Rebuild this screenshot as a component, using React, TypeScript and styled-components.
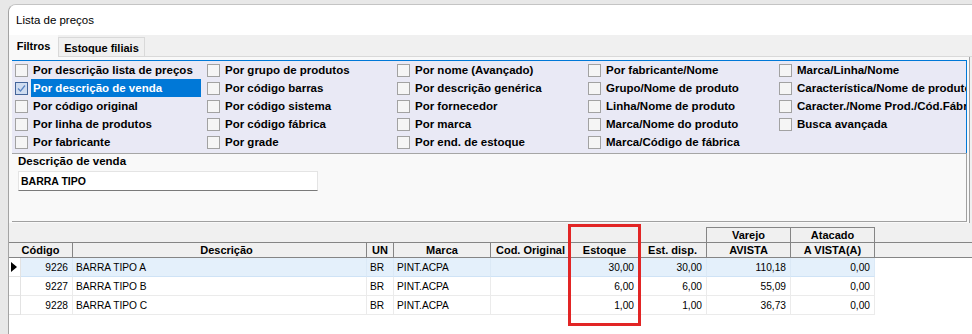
import React from 'react';
import styled, { createGlobalStyle } from 'styled-components';

// Price list window: title bar, filter tabs with a checkbox grid, the
// description search field, and the product grid underneath.

const GlobalStyle = createGlobalStyle`
  html, body { margin: 0; padding: 0; }
  body {
    background: #e8e8e8;
    font-family: "Liberation Sans", Arial, sans-serif;
    color: #000;
    overflow: hidden;
  }
  * { box-sizing: border-box; }
`;

const Page = styled.div`
  width: 972px;
  height: 334px;
  padding: 4px 0 0 8px;
  overflow: hidden;
`;

const Window = styled.div`
  width: 964px;
  height: 340px;
  display: flex;
  flex-direction: column;
  background: #f0f0f0;
  border-top: 1px solid #c4c4c4;
  border-left: 1px solid #a3a3a3;
  border-top-left-radius: 8px;
  overflow: hidden;
`;

const TitleBar = styled.div`
  height: 30px;
  flex-shrink: 0;
  display: flex;
  align-items: center;
  padding-left: 7px;
  background: #fff;
  font-size: 11.5px;
`;

const TabStrip = styled.div`
  height: 22px;
  flex-shrink: 0;
  display: flex;
  align-items: flex-end;
`;

const Tab = styled.div<{ $active?: boolean }>`
  display: flex;
  align-items: center;
  justify-content: center;
  font-size: 11px;
  font-weight: 700;
  width: ${(p) => (p.$active ? 49 : 87)}px;
  height: ${(p) => (p.$active ? 22 : 20)}px;
  background: ${(p) => (p.$active ? '#f9f9f9' : '#f0f0f0')};
  border: 1px solid ${(p) => (p.$active ? '#f9f9f9' : '#d9d9d9')};
  border-bottom-color: ${(p) => (p.$active ? '#f9f9f9' : '#d9d9d9')};
  padding-top: ${(p) => (p.$active ? 0 : 1)}px;
`;

const TabFiller = styled.div`
  flex: 1;
  border-bottom: 1px solid #d9d9d9;
`;

const TabPage = styled.div`
  width: 961px;
  flex-shrink: 0;
  padding: 3px 2px 1px 3px;
  background: #f9f9f9;
  border-right: 1px solid #a0a0a0;
`;

const FilterPanel = styled.div`
  height: 93px;
  display: grid;
  grid-template-columns: 192px 190px 191px 191px 1fr;
  grid-template-rows: repeat(5, 18px);
  grid-auto-flow: column;
  padding: 0 0 2px 3px;
  background: #e9e9f5;
  border-top: 1px solid #0078d7;
  border-right: 1px solid #0078d7;
  overflow: hidden;
`;

const FilterItem = styled.label`
  display: flex;
  align-items: center;
  gap: 3px;
  min-width: 0;
`;

const Box = styled.span<{ $checked?: boolean }>`
  width: 13px;
  height: 13px;
  flex-shrink: 0;
  display: flex;
  align-items: center;
  justify-content: center;
  background: ${(p) => (p.$checked ? '#cfdcf0' : '#f5f5f5')};
  border: 1px solid ${(p) => (p.$checked ? '#44659a' : '#a2a2a2')};
`;

const FilterLabel = styled.span<{ $selected?: boolean }>`
  flex: 1;
  height: 18px;
  display: flex;
  align-items: center;
  margin-right: 6px;
  padding-left: 2px;
  white-space: nowrap;
  font-size: 11.5px;
  font-weight: 700;
  color: ${(p) => (p.$selected ? '#fff' : '#000')};
  background: ${(p) => (p.$selected ? '#0078d7' : 'transparent')};
`;

const DescSection = styled.div`
  height: 69px;
  padding: 1px 0 0 6px;
  border-top: 1px solid #a6a6a6;
  border-right: 1px solid #a0a0a0;
  border-bottom: 1px solid #a0a0a0;
`;

const FieldLabel = styled.div`
  font-size: 11.5px;
  font-weight: 700;
  line-height: 13px;
`;

const FieldInput = styled.div`
  width: 300px;
  height: 20px;
  margin-top: 3px;
  padding-left: 2px;
  display: flex;
  align-items: center;
  background: #fff;
  border: 1px solid #e4e4e4;
  border-bottom-color: #7a7a7a;
  font-size: 10.5px;
  font-weight: 700;
`;

const GridArea = styled.div`
  position: relative;
  flex: 1;
  display: flex;
  flex-direction: column;
  padding-top: 4px;
`;

const BandRow = styled.div`
  height: 15px;
  display: flex;
`;

const BandSpacer = styled.div`
  width: 697px;
`;

const BandCell = styled.div<{ $first?: boolean; $w: number }>`
  width: ${(p) => p.$w}px;
  display: flex;
  align-items: center;
  justify-content: center;
  font-size: 11px;
  font-weight: 700;
  line-height: 14px;
  border-top: 1px solid #858585;
  border-right: 1px solid #858585;
  border-left: ${(p) => (p.$first ? '1px solid #858585' : 'none')};
`;

const HeaderRow = styled.div`
  height: 16px;
  display: flex;
  border-top: 1px solid #858585;
  border-bottom: 1px solid #858585;
`;

const HeaderCell = styled.div<{ $w: number; $pl?: number }>`
  width: ${(p) => p.$w}px;
  flex-shrink: 0;
  display: flex;
  align-items: center;
  justify-content: center;
  padding-left: ${(p) => p.$pl ?? 0}px;
  font-size: 11px;
  font-weight: 700;
  line-height: 14px;
  white-space: nowrap;
  border-right: 1px solid #858585;
`;

const DataBody = styled.div`
  flex: 1;
  background: #fff;
`;

const DataRow = styled.div`
  height: 19px;
  display: flex;
`;

const Indicator = styled.div`
  width: 12px;
  flex-shrink: 0;
  display: flex;
  align-items: center;
  padding-left: 2px;
  border-right: 1px solid #e3e3e3;
  border-bottom: 1px solid #e3e3e3;
`;

const DataCell = styled.div<{ $w: number; $align: 'left' | 'right'; $selected?: boolean }>`
  width: ${(p) => p.$w}px;
  flex-shrink: 0;
  display: flex;
  align-items: center;
  justify-content: ${(p) => (p.$align === 'right' ? 'flex-end' : 'flex-start')};
  padding: 0 4px 0 3px;
  font-size: 10.2px;
  white-space: nowrap;
  background: ${(p) => (p.$selected ? '#e4f0fb' : '#fff')};
  border-right: 1px solid ${(p) => (p.$selected ? '#dbe9f6' : '#ebebeb')};
  border-bottom: 1px solid ${(p) => (p.$selected ? '#cfe3f6' : '#ebebeb')};
`;

const Highlight = styled.div`
  position: absolute;
  left: 559px;
  top: 1px;
  width: 73px;
  height: 102px;
  border: 3px solid #e22525;
  pointer-events: none;
`;

const filters: { label: string; checked?: boolean }[] = [
  { label: 'Por descrição lista de preços' },
  { label: 'Por descrição de venda', checked: true },
  { label: 'Por código original' },
  { label: 'Por linha de produtos' },
  { label: 'Por fabricante' },
  { label: 'Por grupo de produtos' },
  { label: 'Por código barras' },
  { label: 'Por código sistema' },
  { label: 'Por código fábrica' },
  { label: 'Por grade' },
  { label: 'Por nome (Avançado)' },
  { label: 'Por descrição genérica' },
  { label: 'Por fornecedor' },
  { label: 'Por marca' },
  { label: 'Por end. de estoque' },
  { label: 'Por fabricante/Nome' },
  { label: 'Grupo/Nome de produto' },
  { label: 'Linha/Nome de produto' },
  { label: 'Marca/Nome do produto' },
  { label: 'Marca/Código de fábrica' },
  { label: 'Marca/Linha/Nome' },
  { label: 'Característica/Nome de produto' },
  { label: 'Caracter./Nome Prod./Cód.Fábr.' },
  { label: 'Busca avançada' },
];

const headers: { label: string; w: number; pl?: number }[] = [
  { label: 'Código', w: 64 },
  { label: 'Descrição', w: 294, pl: 14 },
  { label: 'UN', w: 27 },
  { label: 'Marca', w: 97 },
  { label: 'Cod. Original', w: 80 },
  { label: 'Estoque', w: 68 },
  { label: 'Est. disp.', w: 68 },
  { label: 'AVISTA', w: 84 },
  { label: 'A VISTA(A)', w: 84 },
];

const columns: { w: number; align: 'left' | 'right' }[] = [
  { w: 52, align: 'right' },
  { w: 294, align: 'left' },
  { w: 27, align: 'left' },
  { w: 97, align: 'left' },
  { w: 80, align: 'left' },
  { w: 68, align: 'right' },
  { w: 68, align: 'right' },
  { w: 84, align: 'right' },
  { w: 84, align: 'right' },
];

const rows = [
  ['9226', 'BARRA TIPO A', 'BR', 'PINT.ACPA', '', '30,00', '30,00', '110,18', '0,00'],
  ['9227', 'BARRA TIPO B', 'BR', 'PINT.ACPA', '', '6,00', '6,00', '55,09', '0,00'],
  ['9228', 'BARRA TIPO C', 'BR', 'PINT.ACPA', '', '1,00', '1,00', '36,73', '0,00'],
];

const Check = () => (
  <svg width="9" height="9" viewBox="0 0 9 9">
    <path d="M1 4.5 L3.5 7 L8 1.5" fill="none" stroke="#5a84c2" strokeWidth="1.2" />
  </svg>
);

const Pointer = () => (
  <svg width="6" height="10" viewBox="0 0 6 10">
    <polygon points="0,0 6,5 0,10" fill="#000" />
  </svg>
);

export default function App() {
  return (
    <Page>
      <GlobalStyle />
      <Window>
        <TitleBar>Lista de preços</TitleBar>
        <TabStrip>
          <Tab $active>Filtros</Tab>
          <Tab>Estoque filiais</Tab>
          <TabFiller />
        </TabStrip>
        <TabPage>
          <FilterPanel>
            {filters.map((f) => (
              <FilterItem key={f.label}>
                <Box $checked={f.checked}>{f.checked && <Check />}</Box>
                <FilterLabel $selected={f.checked}>{f.label}</FilterLabel>
              </FilterItem>
            ))}
          </FilterPanel>
          <DescSection>
            <FieldLabel>Descrição de venda</FieldLabel>
            <FieldInput>BARRA TIPO</FieldInput>
          </DescSection>
        </TabPage>
        <GridArea>
          <BandRow>
            <BandSpacer />
            <BandCell $first $w={85}>Varejo</BandCell>
            <BandCell $w={84}>Atacado</BandCell>
          </BandRow>
          <HeaderRow>
            {headers.map((h) => (
              <HeaderCell key={h.label} $w={h.w} $pl={h.pl}>
                {h.label}
              </HeaderCell>
            ))}
          </HeaderRow>
          <DataBody>
            {rows.map((r, i) => (
              <DataRow key={r[0]}>
                <Indicator>{i === 0 && <Pointer />}</Indicator>
                {r.map((v, j) => (
                  <DataCell key={j} $w={columns[j].w} $align={columns[j].align} $selected={i === 0}>
                    {v}
                  </DataCell>
                ))}
              </DataRow>
            ))}
          </DataBody>
          <Highlight />
        </GridArea>
      </Window>
    </Page>
  );
}
